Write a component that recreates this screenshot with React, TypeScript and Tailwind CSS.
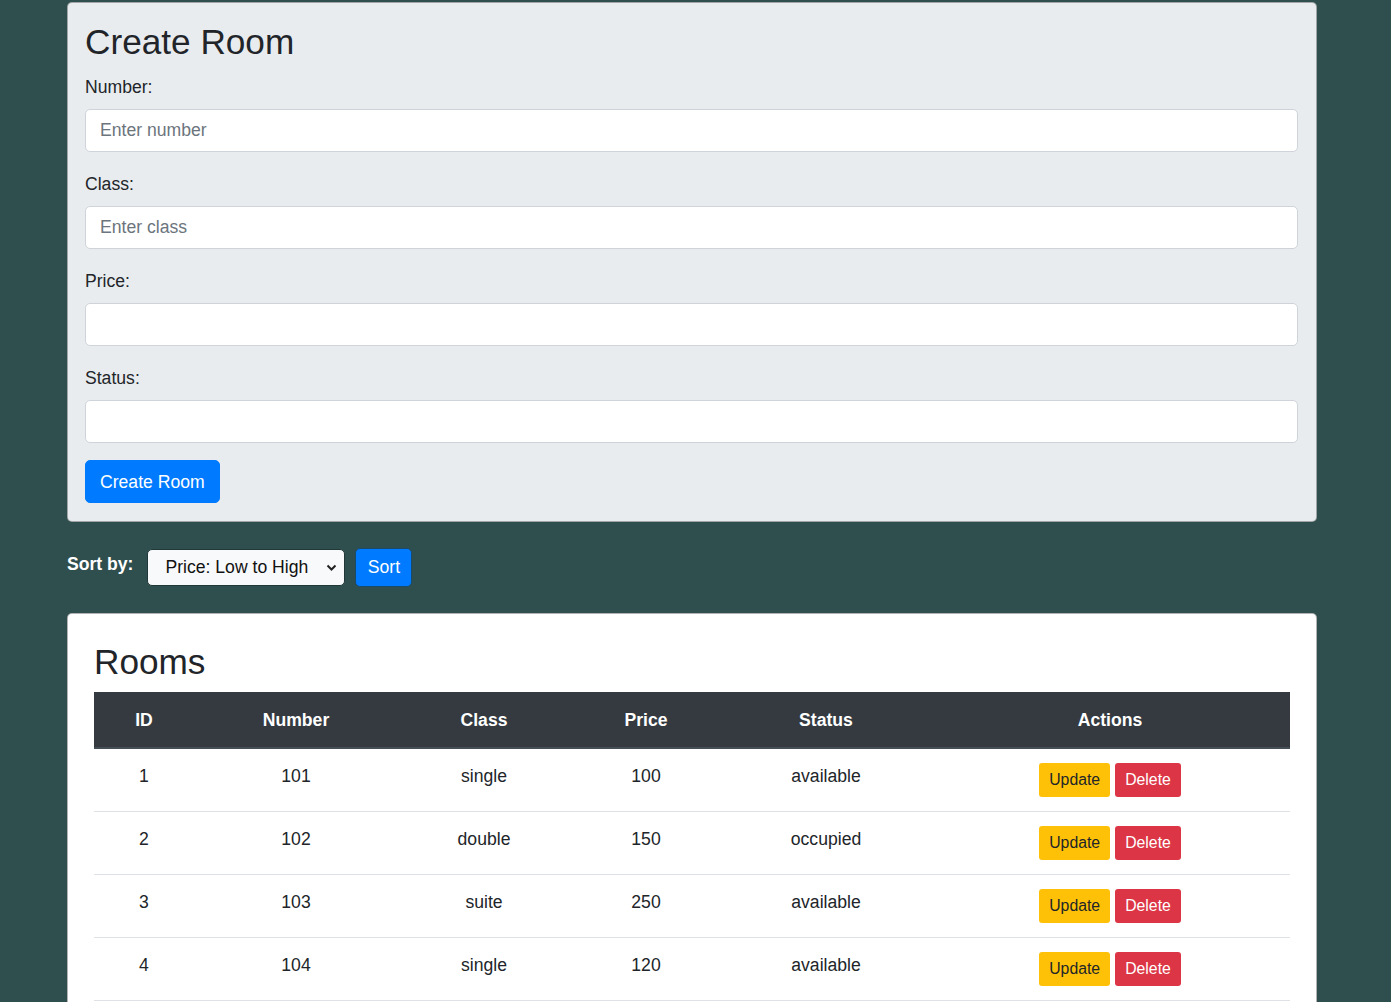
import { useState } from 'react';

const rooms = [
  { id: 1, number: 101, roomClass: 'single', price: 100, status: 'available' },
  { id: 2, number: 102, roomClass: 'double', price: 150, status: 'occupied' },
  { id: 3, number: 103, roomClass: 'suite', price: 250, status: 'available' },
  { id: 4, number: 104, roomClass: 'single', price: 120, status: 'available' },
];

const fields = [
  { label: 'Number:', placeholder: 'Enter number' },
  { label: 'Class:', placeholder: 'Enter class' },
  { label: 'Price:', placeholder: '' },
  { label: 'Status:', placeholder: '' },
];

export default function App() {
  const [sort, setSort] = useState('asc');

  return (
    <div
      className="min-h-screen bg-[#2f4f4f] pt-[2px] pl-[67px] text-[#212529]"
      style={{ fontFamily: '"Liberation Sans", Arial, sans-serif' }}
    >
      <div className="w-[1250px]">
        {/* create form */}
        <div className="rounded-[5px] border border-black/30 bg-[#e9ecef] pl-[17px] pr-[18px] pt-[18px] pb-[18px]">
          <h2 className="mb-[11px] text-[35.2px] leading-[42px] font-normal">Create Room</h2>
          {fields.map((f) => (
            <div key={f.label} className="mb-[19px]">
              <label className="mb-[9px] block text-[17.6px] leading-[26px]">{f.label}</label>
              <input
                type="text"
                placeholder={f.placeholder}
                className="block h-[43px] w-full rounded-[5px] border border-[#ced4da] bg-white px-[14px] text-[17.6px] text-[#495057] outline-none placeholder:text-[#6c757d]"
              />
            </div>
          ))}
          <button className="-mt-[2px] h-[43px] rounded-[5px] border border-[#007bff] bg-[#007bff] px-[14px] text-[17.6px] leading-[26px] text-white">
            Create Room
          </button>
        </div>

        {/* sort bar */}
        <div className="mt-[26px] flex items-center">
          <label className="pb-[8px] text-[17.6px] leading-[26px] font-bold text-white">Sort by:</label>
          <div className="relative ml-[14px]">
            <select
              value={sort}
              onChange={(e) => setSort(e.target.value)}
              className="block h-[37px] w-[198px] appearance-none rounded-[5px] border border-[#203838] bg-[#f8f9fa] pl-[17px] text-[17.6px] text-[#111] outline-none"
            >
              <option value="asc">Price: Low to High</option>
              <option value="desc">Price: High to Low</option>
            </select>
            <svg
              className="pointer-events-none absolute top-[15px] right-[8px]"
              width="11"
              height="8"
              viewBox="0 0 11 8"
              fill="none"
              stroke="#222"
              strokeWidth="2"
            >
              <path d="M1.5 1.5 5.5 5.5 9.5 1.5" />
            </svg>
          </div>
          <button className="ml-[10px] h-[39px] w-[57px] shrink-0 rounded-[5px] border border-[#1a4a6a] bg-[#007bff] text-[17.6px] text-white">
            Sort
          </button>
        </div>

        {/* rooms table */}
        <div className="mt-[26px] rounded-[5px] border border-black/30 bg-white px-[26px] pt-[27px] pb-[26px]">
          <h2 className="mb-[9px] text-[35.2px] leading-[42px] font-normal">Rooms</h2>
          <table className="w-full table-fixed border-collapse text-center text-[17.6px] leading-[26px]">
            <colgroup>
              <col className="w-[100px]" />
              <col className="w-[204px]" />
              <col className="w-[172px]" />
              <col className="w-[152px]" />
              <col className="w-[208px]" />
              <col />
            </colgroup>
            <thead>
              <tr className="bg-[#343a40] text-white">
                {['ID', 'Number', 'Class', 'Price', 'Status', 'Actions'].map((h) => (
                  <th key={h} className="border-b-2 border-[#454d55] pt-[15px] pb-[14px] font-bold">
                    {h}
                  </th>
                ))}
              </tr>
            </thead>
            <tbody>
              {rooms.map((r) => (
                <tr key={r.id} className="border-b border-[#dee2e6]">
                  <td className="pt-[14px] pb-[14px] align-top">{r.id}</td>
                  <td className="pt-[14px] pb-[14px] align-top">{r.number}</td>
                  <td className="pt-[14px] pb-[14px] align-top">{r.roomClass}</td>
                  <td className="pt-[14px] pb-[14px] align-top">{r.price}</td>
                  <td className="pt-[14px] pb-[14px] align-top">{r.status}</td>
                  <td className="pt-[14px] pb-[14px] align-top">
                    <div className="flex justify-center gap-[5px]">
                      <button className="h-[34px] rounded-[3px] bg-[#ffc107] px-[10px] text-[15.8px] text-[#212529]">
                        Update
                      </button>
                      <button className="h-[34px] rounded-[3px] bg-[#dc3545] px-[10px] text-[15.8px] text-white">
                        Delete
                      </button>
                    </div>
                  </td>
                </tr>
              ))}
            </tbody>
          </table>
        </div>
      </div>
    </div>
  );
}
